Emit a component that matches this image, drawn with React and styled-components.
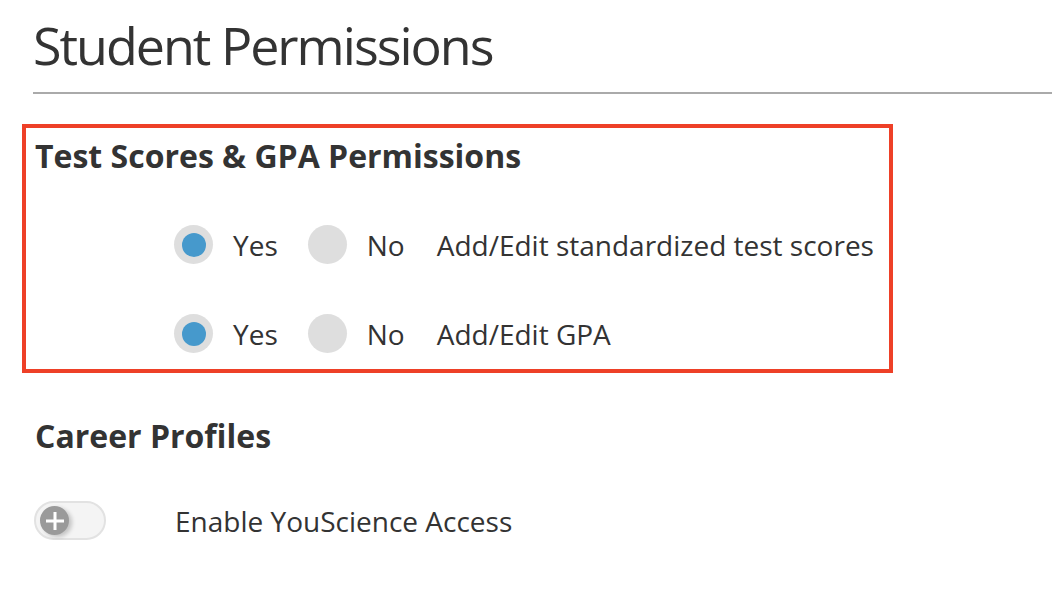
import React from "react";
import styled, { createGlobalStyle } from "styled-components";

const Global = createGlobalStyle`
  html, body { margin: 0; padding: 0; background: #fff; }
  body { font-family: "Open Sans", "Liberation Sans", sans-serif; color: #333; }
`;

const Page = styled.div`
  padding: 9px 0 0 33px;
`;

const Title = styled.h1`
  margin: 0;
  font-size: 52px;
  font-weight: 400;
  letter-spacing: -2px;
  line-height: 71px;
  color: #333;
`;

const Divider = styled.hr`
  margin: 12px 0 30px;
  border: 0;
  height: 2px;
  background: #aaaaaa;
`;

const Highlight = styled.section`
  box-sizing: border-box;
  width: 871px;
  margin-left: -11px;
  border: 4px solid #ee4027;
  padding: 9px 0 16px 9px;
`;

const Heading = styled.h2`
  margin: 0;
  font-size: 32px;
  font-weight: 700;
  line-height: 38px;
  color: #333;
`;

const Rows = styled.div`
  display: flex;
  flex-direction: column;
  gap: 50px;
  margin-top: 50px;
  padding-left: 139px;
`;

const Row = styled.div`
  display: flex;
  align-items: center;
  height: 39px;
`;

const Option = styled.label`
  display: flex;
  align-items: center;
  gap: 20px;
  margin-right: ${(p) => p.$gap}px;
  font-size: 28px;
  color: #333;
`;

const Radio = styled.span`
  box-sizing: border-box;
  width: 39px;
  height: 39px;
  border-radius: 50%;
  background: #dedede;
  display: flex;
  align-items: center;
  justify-content: center;
  &::after {
    content: "";
    width: 24px;
    height: 24px;
    border-radius: 50%;
    background: ${(p) => (p.$checked ? "#4699cc" : "transparent")};
  }
`;

const Label = styled.span`
  font-size: 28px;
  color: #333;
`;

const Career = styled.div`
  margin-top: 44px;
  padding-left: 2px;
`;

const ToggleRow = styled.div`
  display: flex;
  align-items: center;
  margin-top: 46px;
  margin-left: -1px;
`;

const Toggle = styled.span`
  box-sizing: border-box;
  width: 72px;
  height: 39px;
  border-radius: 20px;
  border: 2px solid #e2e2e2;
  background: #f4f4f4;
  display: flex;
  align-items: center;
  padding-left: 4px;
  margin-right: 69px;
`;

const Knob = styled.span`
  width: 29px;
  height: 29px;
  border-radius: 50%;
  background: #9a9a9a;
  box-shadow: 3px 2px 4px rgba(0, 0, 0, 0.2);
  display: flex;
  align-items: center;
  justify-content: center;
`;

export default function App() {
  return (
    <>
      <Global />
      <Page>
        <Title>Student Permissions</Title>
        <Divider />
        <Highlight>
          <Heading>Test Scores &amp; GPA Permissions</Heading>
          <Rows>
            {["Add/Edit standardized test scores", "Add/Edit GPA"].map((t) => (
              <Row key={t}>
                <Option $gap={30}>
                  <Radio $checked />
                  Yes
                </Option>
                <Option $gap={32}>
                  <Radio />
                  No
                </Option>
                <Label>{t}</Label>
              </Row>
            ))}
          </Rows>
        </Highlight>
        <Career>
          <Heading>Career Profiles</Heading>
          <ToggleRow>
            <Toggle>
              <Knob>
                <svg width="20" height="20" viewBox="0 0 20 20">
                  <path d="M10 1v18M1 10h18" stroke="#fff" strokeWidth="3" />
                </svg>
              </Knob>
            </Toggle>
            <Label>Enable YouScience Access</Label>
          </ToggleRow>
        </Career>
      </Page>
    </>
  );
}
